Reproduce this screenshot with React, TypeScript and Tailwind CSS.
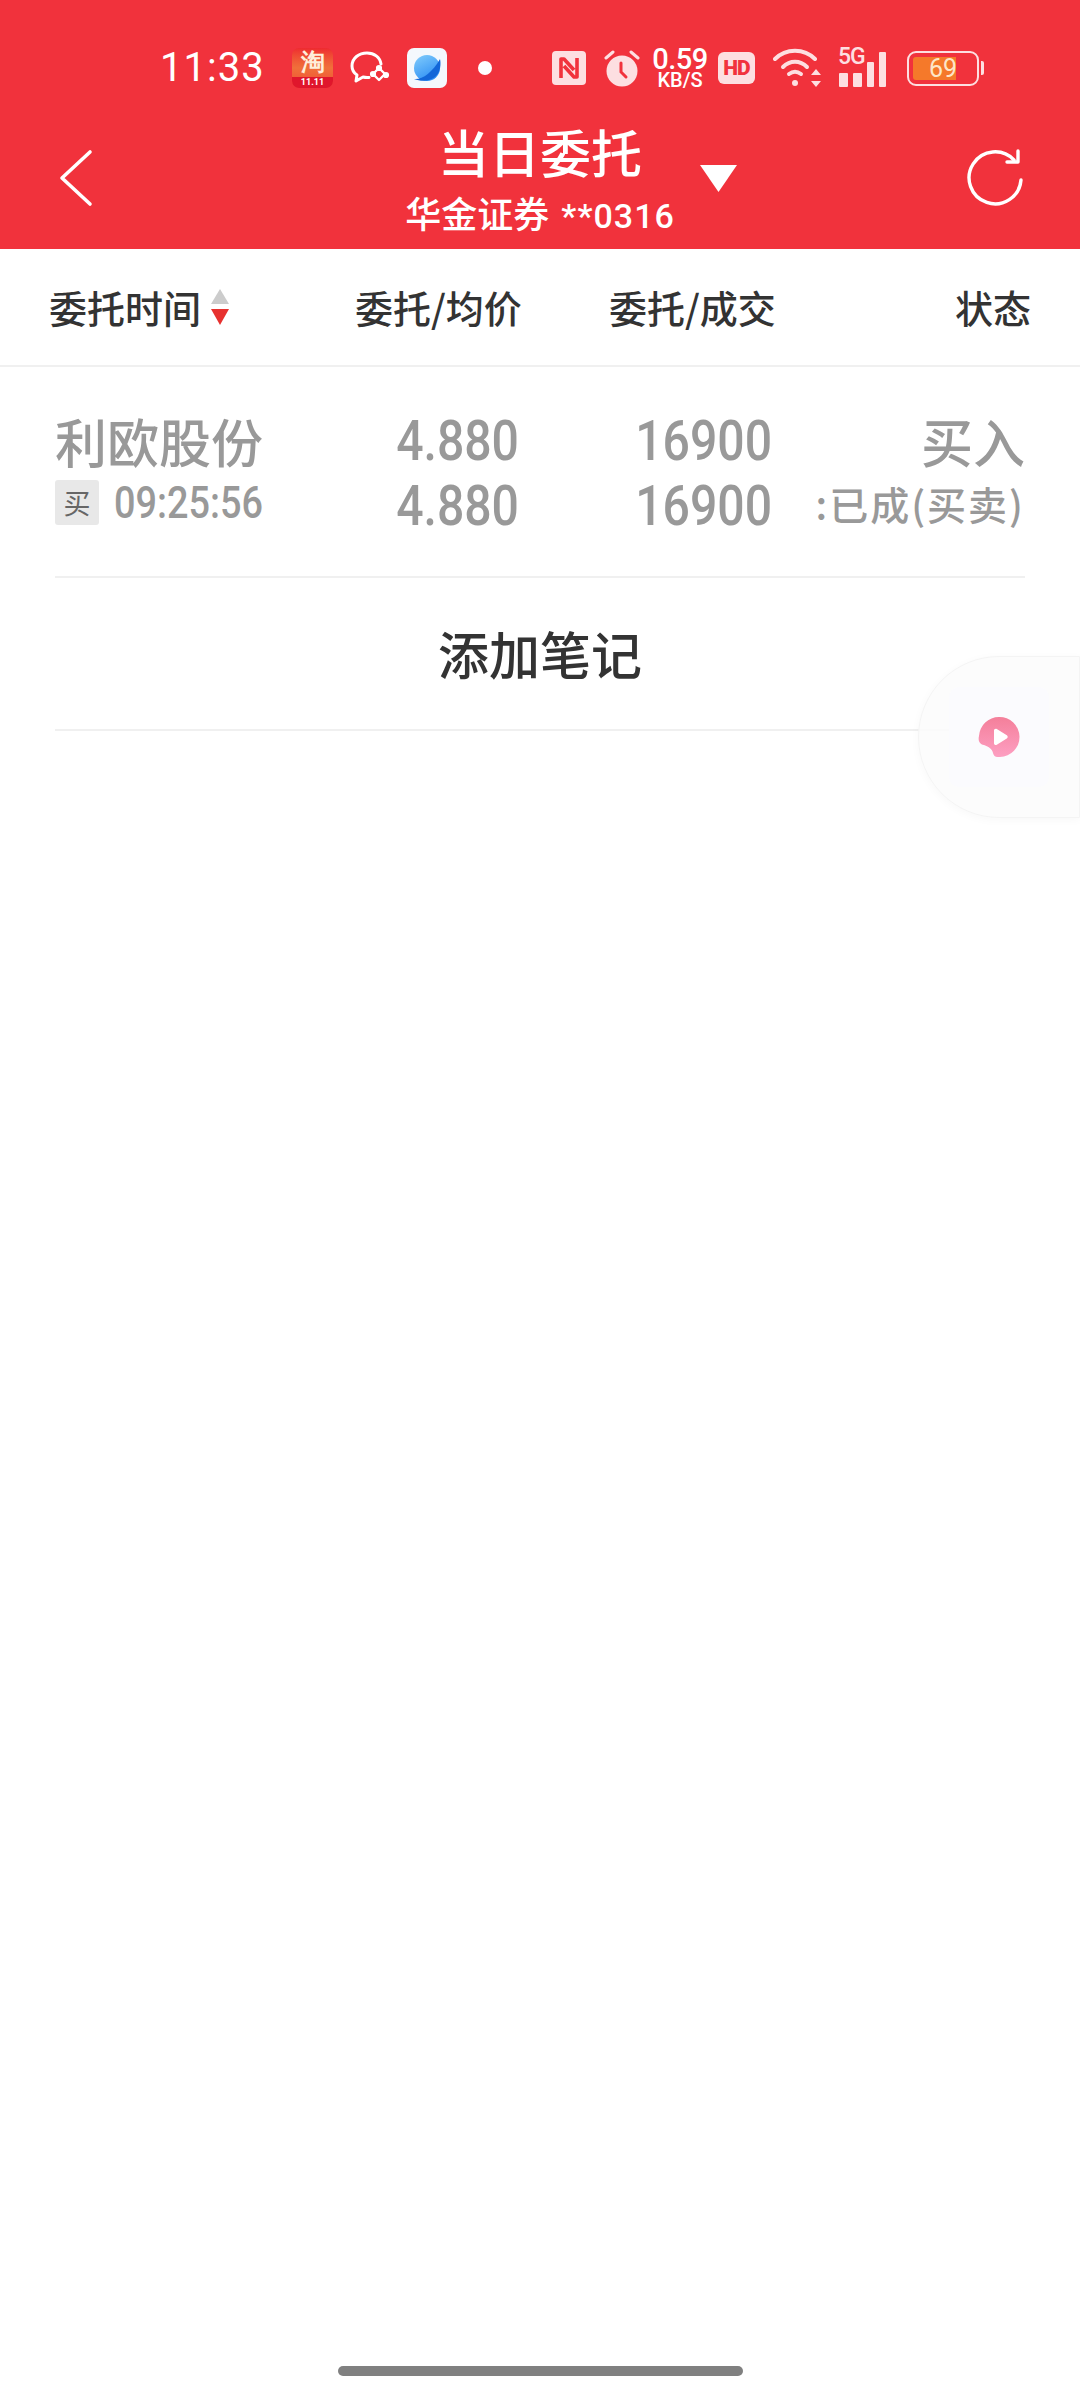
// Phone status bar: clock, notification icons, system indicators
function TaobaoIcon() {
  return (
    <div className="relative flex h-[40px] w-[41px] flex-col items-center rounded-[7px] bg-gradient-to-b from-[#ee2a30] via-[#f0703a] to-[#ef4a34]">
      <span className="text-[24px] leading-[28px] font-bold text-[#ffeeda]">淘</span>
      <span className="absolute bottom-0 flex h-[11px] w-full items-center justify-center rounded-b-[7px] bg-[#e0162c] text-[9px] leading-none font-bold text-white">11.11</span>
    </div>
  );
}

function ChatIcon() {
  return (
    <svg width="40" height="36" viewBox="0 0 40 36" fill="none" stroke="#fff" strokeWidth="3" strokeLinecap="round" strokeLinejoin="round">
      <path d="M31 14C30 7 24 3 17 3 9 3 2 8 2 16c0 4 2 7 5 9l-1 6 7-4c2 .5 4 .6 6 .4" />
      <path d="M29 18l-6 6 6 6 6-6z" strokeWidth="2.4" />
      <circle cx="29" cy="18" r="1.6" fill="#fff" />
      <circle cx="23" cy="24" r="1.6" fill="#fff" />
      <circle cx="36" cy="25" r="1.6" fill="#fff" />
    </svg>
  );
}

function PlanetIcon() {
  return (
    <div className="flex h-[40px] w-[40px] items-center justify-center rounded-[7px] bg-[#f4f8fd]">
      <svg width="30" height="30" viewBox="0 0 30 30">
        <defs>
          <linearGradient id="planet" x1="0.2" y1="0" x2="0.7" y2="1">
            <stop offset="0" stopColor="#7cc8fb" />
            <stop offset="1" stopColor="#2a8cf4" />
          </linearGradient>
        </defs>
        <circle cx="15" cy="15" r="13" fill="url(#planet)" />
        <path d="M2 26c8 1 18-6 26-20 1 4 1 13-5 18-5 4-13 5-21 2z" fill="#1266d8" />
      </svg>
    </div>
  );
}

function NfcIcon() {
  return (
    <svg width="34" height="34" viewBox="0 0 34 34">
      <rect width="34" height="34" rx="4" fill="#fddfe1" />
      <path d="M9 27V8h3l10 11M25 7v19h-3L12 15" fill="none" stroke="#f1323c" strokeWidth="3.6" strokeLinejoin="round" />
    </svg>
  );
}

function AlarmIcon() {
  return (
    <svg width="36" height="38" viewBox="0 0 36 38">
      <circle cx="18" cy="22" r="15.5" fill="#fddfe1" />
      <path d="M2 9l7-6M34 9l-7-6" stroke="#fddfe1" strokeWidth="3" strokeLinecap="round" />
      <path d="M17 14v9l5 5" fill="none" stroke="#f1323c" strokeWidth="3" strokeLinecap="round" />
    </svg>
  );
}

function WifiIcon() {
  return (
    <svg width="50" height="40" viewBox="0 0 50 40" fill="none" stroke="#fddfe1" strokeWidth="4" strokeLinecap="round">
      <path d="M2 11C13 0 31 0 42 11" />
      <path d="M10 19c7-7 17-7 24 0" />
      <path d="M16 26c4-3 8-3 12 0" />
      <circle cx="22" cy="35" r="3" fill="#fddfe1" stroke="none" />
      <path d="M43 21l5 6H38zM43 39l5-6H38z" fill="#fddfe1" stroke="none" />
    </svg>
  );
}

function SignalIcon() {
  return (
    <div className="relative flex h-[38px] w-[54px] items-end gap-[5px]">
      <span className="absolute top-[-4px] left-0 font-['Roboto',sans-serif] text-[23px] leading-[24px] font-medium tracking-[-1px] text-[#fddfe1]">5G</span>
      <div className="ml-[1px] h-[14px] w-[9px] rounded-[1px] bg-[#fddfe1]" />
      <div className="h-[14px] w-[9px] rounded-[1px] bg-[#fddfe1]" />
      <div className="h-[25px] w-[7px] rounded-[1px] bg-[#fddfe1]" />
      <div className="h-[35px] w-[7px] rounded-[1px] bg-[#fddfe1]" />
    </div>
  );
}

function Battery() {
  return (
    <div className="flex items-center gap-[2px]">
      <div className="relative h-[35px] w-[72px] rounded-[9px] border-2 border-[#fddfe1] p-[4px]">
        <div className="h-full w-[43px] rounded-l-[3px] bg-[#f5792a]" />
        <span className="absolute inset-0 flex items-center justify-center font-['Roboto',sans-serif] text-[25px] leading-none text-[#fde6c8]">69</span>
      </div>
      <div className="h-[14px] w-[3px] rounded-r-[2px] bg-[#fddfe1]" />
    </div>
  );
}

function StatusBar() {
  return (
    <div className="flex h-[110px] items-center pt-[26px] pl-[160px] font-['Roboto',sans-serif]">
      <span className="w-[132px] text-[40px] leading-none tracking-[1px] text-white">11:33</span>
      <TaobaoIcon />
      <div className="ml-[17px]">
        <ChatIcon />
      </div>
      <div className="ml-[17px]">
        <PlanetIcon />
      </div>
      <div className="ml-[31px] h-[14px] w-[14px] rounded-full bg-white" />
      <div className="ml-[60px]">
        <NfcIcon />
      </div>
      <div className="ml-[18px]">
        <AlarmIcon />
      </div>
      <div className="ml-[11px] flex w-[58px] flex-col items-center whitespace-nowrap text-[#fff]">
        <span className="text-[29px] leading-[24px] font-medium tracking-[-0.5px]">0.59</span>
        <span className="text-[20px] leading-[18px] font-medium">KB/S</span>
      </div>
      <div className="ml-[9px] flex h-[32px] w-[37px] items-center justify-center rounded-[6px] bg-[#fddfe1] text-[21px] leading-none font-black tracking-[-1px] text-[#f1323c]">
        HD
      </div>
      <div className="ml-[18px]">
        <WifiIcon />
      </div>
      <div className="ml-[15px]">
        <SignalIcon />
      </div>
      <div className="ml-[15px]">
        <Battery />
      </div>
    </div>
  );
}

function TitleBar() {
  return (
    <div className="relative flex h-[139px] items-center justify-between pr-[54px] pl-[58px] text-white">
      <svg width="36" height="58" viewBox="0 0 36 58" fill="none" stroke="#fff" strokeWidth="3.6" strokeLinecap="round" strokeLinejoin="round" className="mt-[-4px]">
        <path d="M32 3L4 29l28 26" />
      </svg>
      <div className="absolute top-[6px] left-0 flex w-full flex-col items-center">
        <span className="text-[51px] leading-[70px] font-medium">当日委托</span>
        <span className="mt-[5px] text-[36px] leading-[42px] font-medium">
          华金证券 <span className="ml-[4px] font-['Roboto',sans-serif] text-[34px] tracking-[1px]">**0316</span>
        </span>
      </div>
      <svg className="absolute top-[55px] left-[700px]" width="37" height="27" viewBox="0 0 37 27">
        <path d="M0 0h37L18.5 27z" fill="#fff" />
      </svg>
      <svg width="60" height="60" viewBox="0 0 60 60" fill="none" stroke="#fff" strokeWidth="3.4" strokeLinecap="round" strokeLinejoin="round" className="mt-[-4px]">
        <path d="M55 32a26 26 0 1 1-7-20" />
        <path d="M52 3v11H41" />
      </svg>
    </div>
  );
}

function ColumnHeaders() {
  return (
    <div className="grid h-[118px] grid-cols-[306px_254px_347px_75px] items-center border-b-2 border-[#f0f0f0] pl-[49px] text-[38px] leading-none whitespace-nowrap text-[#333333]">
      <div className="flex items-center gap-[9px] font-medium">
        委托时间
        <svg width="20" height="36" viewBox="0 0 20 36">
          <path d="M10 0l9 15H1z" fill="#cccccc" />
          <path d="M1 20h18l-9 16z" fill="#e7312f" />
        </svg>
      </div>
      <div className="font-medium">委托/均价</div>
      <div className="font-medium">委托/成交</div>
      <div className="flex justify-end font-medium">状态</div>
    </div>
  );
}

function OrderRow() {
  return (
    <div className="mx-[55px] grid h-[211px] grid-cols-[250px_214px_253px_253px] items-center border-b-2 border-[#f0f0f0] text-[#999999]">
      <div className="whitespace-nowrap">
        <div className="text-[52px] leading-[62px] font-medium">利欧股份</div>
        <div className="flex h-[62px] items-center gap-[15px]">
          <span className="flex h-[45px] w-[44px] shrink-0 items-center justify-center rounded-[3px] bg-[#e8e8e8] text-[27px] leading-none text-[#666666]">买</span>
          <span className="origin-left scale-x-[0.86] font-['Roboto',sans-serif] text-[44px] leading-none font-medium">09:25:56</span>
        </div>
      </div>
      <div className="mt-[4px] origin-right scale-x-[0.86] text-right font-['Roboto',sans-serif] text-[56px] leading-[65px] font-medium">
        <div>4.880</div>
        <div>4.880</div>
      </div>
      <div className="mt-[4px] origin-right scale-x-[0.86] text-right font-['Roboto',sans-serif] text-[56px] leading-[65px] font-medium">
        <div>16900</div>
        <div>16900</div>
      </div>
      <div className="text-right whitespace-nowrap">
        <div className="text-[52px] leading-[62px] font-medium">买入</div>
        <div className="text-[39px] leading-[62px] font-medium tracking-[2px]">:已成(买卖)</div>
      </div>
    </div>
  );
}

function FloatingPlayer() {
  return (
    <div className="absolute top-[656px] right-0 flex h-[162px] w-[162px] items-center rounded-l-[81px] border border-[#f4f4f4] bg-[#fbfbfc]/85 pl-[30px] shadow-[0_2px_10px_rgba(0,0,0,0.03)]">
      <div className="flex h-[100px] w-[100px] items-center justify-center rounded-[10px] bg-[#fbfbfe]">
        <svg width="42" height="42" viewBox="0 0 42 42">
          <defs>
            <linearGradient id="player" x1="0" y1="0" x2="0" y2="1">
              <stop offset="0" stopColor="#f47f9a" />
              <stop offset="1" stopColor="#fd9fc2" />
            </linearGradient>
          </defs>
          <path d="M21 1a20 20 0 0 1 1 40c-5 .5-6-1-7-4-1-4-4-6-9-8-5-1-6-5-5-9A20 20 0 0 1 21 1z" fill="url(#player)" />
          <path d="M16 14.500c0-1.500 1.500-2.300 2.800-1.500l10 6.300c1.200.8 1.200 2.500 0 3.300l-10 6.200c-1.300.8-2.800 0-2.800-1.500z" fill="#fff" />
        </svg>
      </div>
    </div>
  );
}

export default function App() {
  return (
    <div className="relative flex h-[2400px] w-[1080px] flex-col overflow-hidden bg-white font-['Noto_Sans_CJK_SC',sans-serif]">
      <header className="h-[249px] bg-[#f1323c]">
        <StatusBar />
        <TitleBar />
      </header>

      <ColumnHeaders />
      <OrderRow />

      {/* Notes entry */}
      <div className="mx-[55px] flex h-[153px] items-center justify-center border-b-2 border-[#f0f0f0] text-[51px] leading-none font-medium text-[#333333]">
        添加笔记
      </div>

      <FloatingPlayer />

      {/* Gesture bar */}
      <div className="mt-auto mb-[24px] h-[10px] w-[405px] self-center rounded-full bg-[#808080]" />
    </div>
  );
}
